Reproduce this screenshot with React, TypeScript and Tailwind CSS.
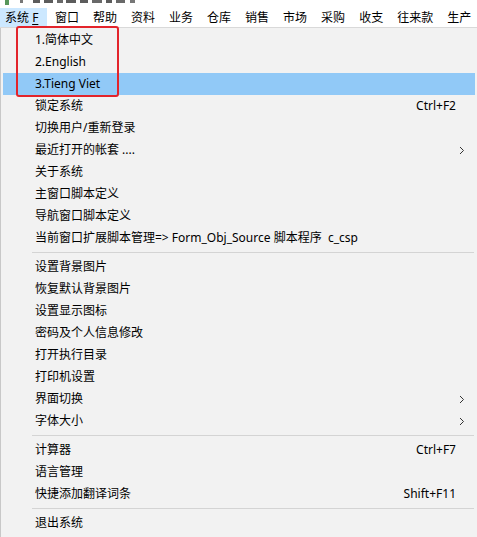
import React from "react";

type Item = { label: string; shortcut?: string; sub?: boolean; active?: boolean } | "sep";

const topMenus = ["窗口", "帮助", "资料", "业务", "仓库", "销售", "市场", "采购", "收支", "往来款", "生产"];

const items: Item[] = [
  { label: "1.简体中文" },
  { label: "2.English" },
  { label: "3.Tieng Viet", active: true },
  { label: "锁定系统", shortcut: "Ctrl+F2" },
  { label: "切换用户/重新登录" },
  { label: "最近打开的帐套 ....", sub: true },
  { label: "关于系统" },
  { label: "主窗口脚本定义" },
  { label: "导航窗口脚本定义" },
  { label: "当前窗口扩展脚本管理=> Form_Obj_Source 脚本程序  c_csp" },
  "sep",
  { label: "设置背景图片" },
  { label: "恢复默认背景图片" },
  { label: "设置显示图标" },
  { label: "密码及个人信息修改" },
  { label: "打开执行目录" },
  { label: "打印机设置" },
  { label: "界面切换", sub: true },
  { label: "字体大小", sub: true },
  "sep",
  { label: "计算器", shortcut: "Ctrl+F7" },
  { label: "语言管理" },
  { label: "快捷添加翻译词条", shortcut: "Shift+F11" },
  "sep",
  { label: "退出系统" },
];

// bottom edges of the cut-off window title, drawn as bits
const titleBits = [
  [5, 4, "#2e7d32"], [20, 3, "#555"], [33, 7, "#333"], [44, 9, "#333"], [57, 6, "#444"],
  [66, 10, "#333"], [80, 8, "#333"], [92, 10, "#444"], [106, 6, "#333"], [116, 9, "#444"], [130, 5, "#555"],
] as const;

const Chevron = () => (
  <svg width="6" height="9" viewBox="0 0 6 9" className="absolute right-[10px] top-[7px]">
    <polyline points="1,1 4.5,4.5 1,8" fill="none" stroke="#333" strokeWidth="1" />
  </svg>
);

export default function App() {
  return (
    <div
      className="relative w-[477px] h-[537px] overflow-hidden bg-white text-[12px] text-black"
      style={{ fontFamily: '"Noto Sans", "Noto Sans CJK SC", sans-serif' }}
    >
      {/* cut-off title bar */}
      <svg width="477" height="8" className="block">
        {titleBits.map(([x, w, c], i) => (
          <rect key={i} x={x} y={0} width={w} height={i === 0 ? 5 : 3} fill={c} opacity={0.8} />
        ))}
      </svg>

      {/* menu bar */}
      <div className="flex h-[20px] items-stretch border-b border-[#d9d9d9] leading-[19px] whitespace-nowrap">
        <div className="w-[48px] shrink-0 flex">
          <div className="w-[47px] pl-[5px] bg-[#cce8ff]">
            系统 <span className="underline underline-offset-2">F</span>
          </div>
        </div>
        {topMenus.map((m) => (
          <div key={m} className="shrink-0 px-[7px]">{m}</div>
        ))}
      </div>

      {/* dropdown */}
      <div className="bg-[#f2f2f2] border-l border-[#c8c8c8] pt-[1px] h-full">
        {items.map((it, i) =>
          it === "sep" ? (
            <div key={i} className="h-[7px] pt-[3px] pl-[31px] pr-[3px]">
              <div className="h-px bg-[#d4d4d4]" />
            </div>
          ) : (
            <div
              key={i}
              className={`relative mx-[2px] h-[22px] leading-[22px] pl-[32px] pr-[19px] flex justify-between whitespace-nowrap ${
                it.active ? "bg-[#91c9f7]" : ""
              }`}
            >
              <span className="whitespace-pre">{it.label}</span>
              {it.shortcut && <span>{it.shortcut}</span>}
              {it.sub && <Chevron />}
            </div>
          )
        )}
      </div>

      {/* red annotation box */}
      <div className="absolute left-[16px] top-[26px] w-[103px] h-[71px] border-[2.5px] border-[#e3242b] rounded-[3px]" />
    </div>
  );
}
